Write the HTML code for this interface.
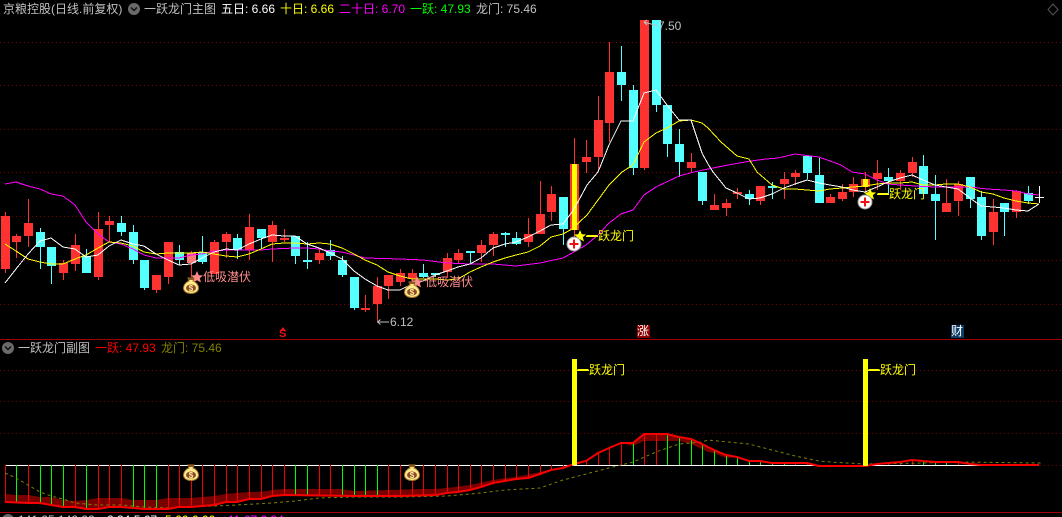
<!DOCTYPE html>
<html><head><meta charset="utf-8"><style>
html,body{margin:0;padding:0;background:#000;width:1062px;height:517px;overflow:hidden}
#r{position:relative;width:1062px;height:517px;overflow:hidden;background:#000}
svg{position:absolute;left:0;top:0}
.t{position:absolute;white-space:nowrap;font:12px/14px "Liberation Sans","WenQuanYi Zen Hei","Noto Sans CJK SC",sans-serif;color:#c0c0c0}
</style></head><body><div id="r">
<svg width="1062" height="517" viewBox="0 0 1062 517">
<g stroke="#800000" stroke-dasharray="1 3" fill="none" shape-rendering="crispEdges">
<path d="M0 42.5H1062M0 85.5H1062M0 129.5H1062M0 172.5H1062M0 216.5H1062M0 260.5H1062M0 304.5H1062M0 370.5H1062M0 401.5H1062M0 433.5H1062M1040 465.5H1062"/>
</g>
<path d="M0 339.5H1062M0 512.5H1062" stroke="#a00000" fill="none" shape-rendering="crispEdges"/>
<!-- red wicks -->
<path fill="none" stroke="#ff3232" shape-rendering="crispEdges" d="M5.5 212V273M16.5 234V258M28.5 199V247M63.5 260V280M75.5 234V271M98.5 212V280M109.5 216V242M156.5 275V293M168.5 242V284M191.5 251V277M214.5 240V274M226.5 232V258M249.5 214V260M272.5 221V262M284.5 229V242M319.5 249V264M365.5 295V312M377.5 277V322M388.5 275V299M400.5 269V286M412.5 269V287M447.5 253V278M458.5 249V263M481.5 240V262M493.5 232V256M528.5 218V247M540.5 181V234M551.5 186V221M574.5 138V237M586.5 140V173M598.5 96V170M609.5 42V142M644.5 20V170M691.5 153V173M714.5 194V210M726.5 199V216M737.5 188V199M760.5 186V205M784.5 172V199M795.5 170V185M830.5 194V203M842.5 184V201M853.5 177V197M865.5 172V192M877.5 160V190M900.5 170V190M912.5 157V177M946.5 179V212M958.5 181V216M993.5 199V245M1016.5 190V218"/>
<!-- red bodies -->
<path fill="none" stroke="#ff3232" stroke-width="9" shape-rendering="crispEdges" d="M5.5 216V269M16.5 236V242M28.5 223V236M63.5 263V273M75.5 245V264M98.5 229V277M109.5 221V225M156.5 275V290M168.5 242V277M191.5 253V263M214.5 242V274M226.5 234V242M249.5 227V250M272.5 225V242M284.5 238V240M319.5 253V260M365.5 308V310M377.5 286V304M388.5 275V286M400.5 273V282M412.5 273V279M447.5 258V272M458.5 253V260M481.5 245V253M493.5 234V245M528.5 234V242M540.5 214V234M551.5 194V212M574.5 164V230M586.5 157V162M598.5 120V157M609.5 72V123M644.5 20V168M691.5 162V168M714.5 205V210M726.5 203V208M737.5 192V194M760.5 186V201M784.5 179V184M795.5 173V177M830.5 197V203M842.5 192V199M853.5 184V192M865.5 179V187M877.5 173V179M900.5 173V181M912.5 162V173M946.5 203V212M958.5 184V201M993.5 212V232M1016.5 191V212"/>
<!-- cyan wicks -->
<path fill="none" stroke="#54ffff" shape-rendering="crispEdges" d="M40.5 228V269M51.5 247V284M86.5 249V273M121.5 216V236M133.5 225V264M144.5 260V290M179.5 245V265M202.5 236V264M237.5 234V259M261.5 229V249M295.5 236V264M307.5 242V269M330.5 240V260M342.5 256V277M354.5 277V310M423.5 264V278M435.5 273V277M470.5 251V263M505.5 232V247M516.5 232V245M563.5 197V245M621.5 46V101M633.5 85V175M656.5 20V112M667.5 105V157M679.5 129V177M702.5 172V205M749.5 190V205M772.5 182V199M807.5 156V179M819.5 158V203M888.5 168V194M923.5 155V194M935.5 175V240M970.5 177V208M981.5 191V240M1004.5 203V236M1028.5 186V204"/>
<!-- cyan bodies -->
<path fill="none" stroke="#54ffff" stroke-width="9" shape-rendering="crispEdges" d="M40.5 232V247M51.5 247V266M86.5 256V273M121.5 223V232M133.5 232V260M144.5 260V288M179.5 252V260M202.5 252V262M237.5 238V250M261.5 229V238M295.5 236V256M307.5 260V262M330.5 250V256M342.5 260V275M354.5 277V308M423.5 273V277M435.5 273V275M470.5 251V253M505.5 233V235M516.5 238V244M563.5 197V229M621.5 72V85M633.5 90V168M656.5 20V105M667.5 105V144M679.5 144V162M702.5 172V201M749.5 194V199M772.5 186V188M807.5 156V173M819.5 175V203M888.5 177V181M923.5 166V194M935.5 194V201M970.5 177V199M981.5 197V236M1004.5 203V212M1028.5 193V201"/>
<rect x="187" y="253" width="9" height="10" fill="#ff7a7a"/>
<rect x="572" y="164" width="5" height="66" fill="#ffff00"/>
<rect x="863" y="179" width="5" height="8" fill="#ffff00"/>
<path d="M1039.5 186V203M1035 197.5H1044" stroke="#fff" fill="none" shape-rendering="crispEdges"/>
<!-- MA lines -->
<polyline fill="none" stroke="#ff00ff" shape-rendering="crispEdges" points="5,184 16,182 28,186 40,189 51,194 63,196 75,205 86,222 98,234 109,242 121,244 133,249 144,255 156,258 168,258 179,258 191,255 202,254 214,251 226,250 249,250 261,250 272,249 295,248 307,248 319,249 330,251 342,252 354,255 365,258 400,259 423,260 447,263 470,264 493,264 516,266 540,263 563,258 574,252 586,245 598,235 609,223 621,214 633,210 644,195 656,187 679,176 694,172 708,169 728,165 751,161 766,159 778,158 795,154 803,155 819,157 830,161 841,165 852,172 865,174 877,180 888,184 900,185 915,186 935,187 958,187 970,187 987,189 1004,190 1016,191 1028,194 1039,195"/>
<polyline fill="none" stroke="#ffff00" shape-rendering="crispEdges" points="5,244 16,251 28,259 40,262 51,264 63,264 75,259 86,255 98,248 109,242 121,243 133,246 144,252 156,254 168,253 179,253 191,253 202,252 214,254 226,256 237,257 249,254 261,249 272,244 284,243 295,243 307,244 319,243 330,244 342,248 354,254 365,260 377,265 388,272 400,276 412,279 423,279 435,279 447,280 458,279 470,272 481,267 493,262 505,258 516,255 528,252 540,246 551,237 563,234 572,229 587,215 598,200 609,185 622,172 633,165 644,142 656,133 667,128 679,121 691,120 702,123 708,128 721,142 737,156 749,159 757,172 772,185 784,189 795,189 807,190 819,191 830,189 842,188 853,187 865,186 877,184 888,183 900,183 912,182 923,185 935,185 946,184 958,184 970,187 981,192 993,194 1004,198 1016,201 1028,203 1039,204"/>
<polyline fill="none" stroke="#ffffff" shape-rendering="crispEdges" points="5,283 16,269 28,254 40,241 51,238 63,247 75,249 86,257 98,255 109,246 121,240 133,244 144,246 156,254 168,260 179,265 191,264 202,258 214,252 226,249 237,250 249,244 261,239 272,235 284,236 295,236 307,244 319,248 330,253 342,259 354,271 365,279 377,286 388,290 400,290 412,284 423,281 435,275 447,271 458,267 470,264 481,258 493,248 505,244 516,242 528,237 540,231 551,225 563,224 572,212 579,200 587,185 598,172 609,145 621,121 633,121 644,93 656,90 667,105 679,120 691,120 702,153 708,164 713,172 726,188 737,193 749,199 760,198 772,194 784,188 795,184 807,180 819,183 830,185 842,187 853,190 865,192 877,187 888,182 900,178 912,175 923,180 935,185 946,187 958,189 970,198 981,206 993,207 1004,208 1016,210 1028,211 1039,204"/>
<!-- signal arrows -->
<path d="M644 22L658 26M644 22l3-2M644 22l3 3" stroke="#c0c0c0" fill="none"/>
<path d="M377.5 322H389M377.5 322l3-2.5M377.5 322l3 2.5" stroke="#c0c0c0" fill="none"/>
<path d="M586 236.5H598M877 194.5H889" stroke="#ffff00" fill="none" shape-rendering="crispEdges"/>
<!-- stars -->
<polygon fill="#ff8a8a" points="197,271 198.8,275.2 203,275.5 199.8,278.3 201,282.5 197,280.2 193,282.5 194.2,278.3 191,275.5 195.2,275.2"/>
<polygon fill="#ff8a8a" points="417,276 418.8,280.2 423,280.5 419.8,283.3 421,287.5 417,285.2 413,287.5 414.2,283.3 411,280.5 415.2,280.2"/>
<polygon fill="#ffff00" points="580,230 581.8,234.2 586,234.5 582.8,237.3 584,241.5 580,239.2 576,241.5 577.2,237.3 574,234.5 578.2,234.2"/>
<polygon fill="#ffff00" points="870,188 871.8,192.2 876,192.5 872.8,195.3 874,199.5 870,197.2 866,199.5 867.2,195.3 864,192.5 868.2,192.2"/>
<!-- plus circles -->
<circle cx="574" cy="244" r="7" fill="#fff" stroke="#999"/><path d="M569.5 244H578.5M574 239.5V248.5" stroke="#f01010" stroke-width="2"/>
<circle cx="865" cy="202" r="7" fill="#fff" stroke="#999"/><path d="M860.5 202H869.5M865 197.5V206.5" stroke="#f01010" stroke-width="2"/>
<!-- diamond -->
<path d="M1053 4L1058 9.5L1053 15L1048 9.5Z" fill="none" stroke="#555"/>
<!-- chevron circles -->
<circle cx="134" cy="9" r="6" fill="#6a6a6a"/><path d="M131 7.5L134 10.5L137 7.5" fill="none" stroke="#111" stroke-width="1.5"/>
<circle cx="8" cy="348" r="6" fill="#6a6a6a"/><path d="M5 346.5L8 349.5L11 346.5" fill="none" stroke="#111" stroke-width="1.5"/>
<circle cx="8" cy="520" r="6" fill="#6a6a6a"/>
<!-- markers -->
<path d="M283 327L286 331H280Z" fill="#f01010"/>
<rect x="637" y="325" width="13" height="13" fill="#8b0000"/>
<rect x="951" y="325" width="13" height="13" fill="#0d3c66"/>
<!-- sub chart -->
<polygon fill="#7a0000" points="5,494 16,495 28,495 40,497 51,497 63,500 75,501 86,500 98,498 121,498 133,500 144,500 156,500 168,498 191,498 214,496 226,494 249,492 261,492 272,490 284,489 342,489 354,491 388,490 423,489 435,489 447,488 470,485 493,480 505,478 516,477 540,472 563,467 574,464 574,465 563,468 551,470 540,474 528,478 516,479 505,481 493,483 481,487 470,490 458,492 447,493 436,495 400,496 354,497 284,495 272,496 261,499 249,499 237,502 226,502 214,505 202,506 191,507 179,507 168,509 144,509 133,508 121,507 109,507 98,509 86,509 75,507 63,507 51,505 40,503 28,503 5,502"/>
<polygon fill="#7a0000" points="621,443 633,443 644,434 667,434 679,437 691,439 702,444 714,450 726,455 737,457 726,458 714,453 708,452 691,444 679,441 667,441 644,441 633,446"/>
<path d="M5 465.5H1039" stroke="#fff" fill="none" shape-rendering="crispEdges"/>
<path fill="none" stroke="#f00000" shape-rendering="crispEdges" d="M5.5 465V502M28.5 465V503M75.5 465V507M98.5 465V509M109.5 465V507M121.5 465V507M168.5 465V509M179.5 465V507M191.5 465V507M202.5 465V506M214.5 465V505M226.5 465V502M237.5 465V502M249.5 465V499M261.5 465V499M272.5 465V496M284.5 465V495M319.5 465V495M330.5 465V495M388.5 465V496M400.5 465V496M412.5 465V496M423.5 465V495M435.5 465V495M447.5 465V493M458.5 465V492M470.5 465V490M481.5 465V487M493.5 465V483M505.5 465V481M516.5 465V479M528.5 465V478M540.5 465V474M551.5 465V470M563.5 465V468M586.5 465V461M598.5 465V453M609.5 465V448M621.5 465V443M644.5 465V434M656.5 465V434M795.5 465V463M807.5 465V463M877.5 465V464M888.5 465V463M900.5 465V462M912.5 465V460M958.5 465V462"/>
<path fill="none" stroke="#00ff00" shape-rendering="crispEdges" d="M16.5 465V502M40.5 465V503M51.5 465V505M63.5 465V507M86.5 465V509M133.5 465V508M144.5 465V509M156.5 465V509M295.5 465V495M307.5 465V495M342.5 465V495M354.5 465V497M365.5 465V497M377.5 465V497M633.5 465V443M667.5 465V434M679.5 465V437M691.5 465V439M702.5 465V444M714.5 465V450M726.5 465V455M737.5 465V457M749.5 465V461M760.5 465V461M772.5 465V463M784.5 465V463M923.5 465V461M935.5 465V462M946.5 465V462M970.5 465V464"/>
<polyline fill="none" stroke="#808000" stroke-dasharray="3 3" points="5,473 16,478 28,485 40,492 51,496 63,499 75,503 86,504 98,505 121,505 144,507 168,508 191,507 214,506 237,505 272,503 295,501 319,498 354,497 400,497 447,496 481,493 505,490 540,488 563,480 586,474 609,468 633,462 656,452 679,444 702,442 708,440 728,442 749,444 772,450 795,456 819,461 830,462 865,464 923,463 958,462 1041,463"/>
<polyline fill="none" stroke="#f80000" stroke-width="2" points="5,502 28,503 40,503 51,505 63,507 75,507 86,509 98,509 109,507 121,507 133,508 144,509 168,509 179,507 191,507 202,506 214,505 226,502 237,502 249,499 261,499 272,496 284,495 354,496 400,496 436,495 447,493 458,492 470,490 481,487 493,483 505,481 516,479 528,478 540,474 551,470 563,468 574,464 586,461 598,453 609,448 621,443 633,443 644,434 667,434 679,437 691,439 702,444 708,447 714,450 726,455 737,457 749,461 760,461 772,463 807,463 819,466 865,466 877,464 888,463 900,462 912,460 923,461 935,462 958,462 970,464 981,465 1039,465"/>
<rect x="572" y="359" width="5" height="106" fill="#ffff00"/>
<rect x="863" y="359" width="5" height="107" fill="#ffff00"/>
<!-- bags -->
<g transform="translate(191 286)"><path d="M-3-8H3L2-5C5-4 7.500-1 7.500 2C7.500 5.500 4 7.500 0 7.500S-7.500 5.500-7.500 2C-7.500-1-5-4-2-5Z" fill="#ffe98a" stroke="#a87a28"/><rect x="-3" y="-8" width="6" height="2" fill="#8a5a20"/><ellipse cx="0" cy="2" rx="5" ry="3.500" fill="#8a4a30"/><text x="0" y="5" text-anchor="middle" font-family="Liberation Sans" font-size="8" font-weight="bold" fill="#ffe98a">$</text></g>
<g transform="translate(412 290)"><path d="M-3-8H3L2-5C5-4 7.500-1 7.500 2C7.500 5.500 4 7.500 0 7.500S-7.500 5.500-7.500 2C-7.500-1-5-4-2-5Z" fill="#ffe98a" stroke="#a87a28"/><rect x="-3" y="-8" width="6" height="2" fill="#8a5a20"/><ellipse cx="0" cy="2" rx="5" ry="3.500" fill="#8a4a30"/><text x="0" y="5" text-anchor="middle" font-family="Liberation Sans" font-size="8" font-weight="bold" fill="#ffe98a">$</text></g>
<g transform="translate(191 473)"><path d="M-3-8H3L2-5C5-4 7.500-1 7.500 2C7.500 5.500 4 7.500 0 7.500S-7.500 5.500-7.500 2C-7.500-1-5-4-2-5Z" fill="#ffe98a" stroke="#a87a28"/><rect x="-3" y="-8" width="6" height="2" fill="#8a5a20"/><ellipse cx="0" cy="2" rx="5" ry="3.500" fill="#8a4a30"/><text x="0" y="5" text-anchor="middle" font-family="Liberation Sans" font-size="8" font-weight="bold" fill="#ffe98a">$</text></g>
<g transform="translate(412 473)"><path d="M-3-8H3L2-5C5-4 7.500-1 7.500 2C7.500 5.500 4 7.500 0 7.500S-7.500 5.500-7.500 2C-7.500-1-5-4-2-5Z" fill="#ffe98a" stroke="#a87a28"/><rect x="-3" y="-8" width="6" height="2" fill="#8a5a20"/><ellipse cx="0" cy="2" rx="5" ry="3.500" fill="#8a4a30"/><text x="0" y="5" text-anchor="middle" font-family="Liberation Sans" font-size="8" font-weight="bold" fill="#ffe98a">$</text></g>
<path d="M577 370.500H589M868 370.500H880" stroke="#ffff00" fill="none" shape-rendering="crispEdges"/>
</svg>
<span class="t" style="left:3px;top:2px">京粮控股(日线.前复权)</span>
<span class="t" style="left:144px;top:2px">一跃龙门主图</span>
<span class="t" style="left:221px;top:2px;color:#fff">五日: 6.66</span>
<span class="t" style="left:280px;top:2px;color:#ff0">十日: 6.66</span>
<span class="t" style="left:339px;top:2px;color:#f0f">二十日: 6.70</span>
<span class="t" style="left:410px;top:2px;color:#0f0">一跃: 47.93</span>
<span class="t" style="left:476px;top:2px">龙门: 75.46</span>
<span class="t" style="left:18px;top:341px">一跃龙门副图</span>
<span class="t" style="left:95px;top:341px;color:#f00">一跃: 47.93</span>
<span class="t" style="left:161px;top:341px;color:#808000">龙门: 75.46</span>
<span class="t" style="left:658px;top:19px">7.50</span>
<span class="t" style="left:390px;top:315px">6.12</span>
<span class="t" style="left:203px;top:270px;color:#ff8a8a">低吸潜伏</span>
<span class="t" style="left:425px;top:275px;color:#ff8a8a">低吸潜伏</span>
<span class="t" style="left:586px;top:229px;color:#ff0">一跃龙门</span>
<span class="t" style="left:877px;top:187px;color:#ff0">一跃龙门</span>
<span class="t" style="left:577px;top:363px;color:#ff0">一跃龙门</span>
<span class="t" style="left:868px;top:363px;color:#ff0">一跃龙门</span>
<span class="t" style="left:279px;top:327px;color:#f01010;font-weight:bold;font-size:11px;line-height:14px">S</span>
<span class="t" style="left:637px;top:325px;color:#fff;line-height:13px">涨</span>
<span class="t" style="left:951px;top:325px;color:#fff;line-height:13px">财</span>
<span class="t" style="left:18px;top:513px">141.25 142.23</span>
<span class="t" style="left:107px;top:513px;color:#fff">2.34 5.67</span>
<span class="t" style="left:165px;top:513px;color:#ff0">5.66 6.66</span>
<span class="t" style="left:228px;top:513px;color:#f0f">11.67 2.34</span>
</div></body></html>
